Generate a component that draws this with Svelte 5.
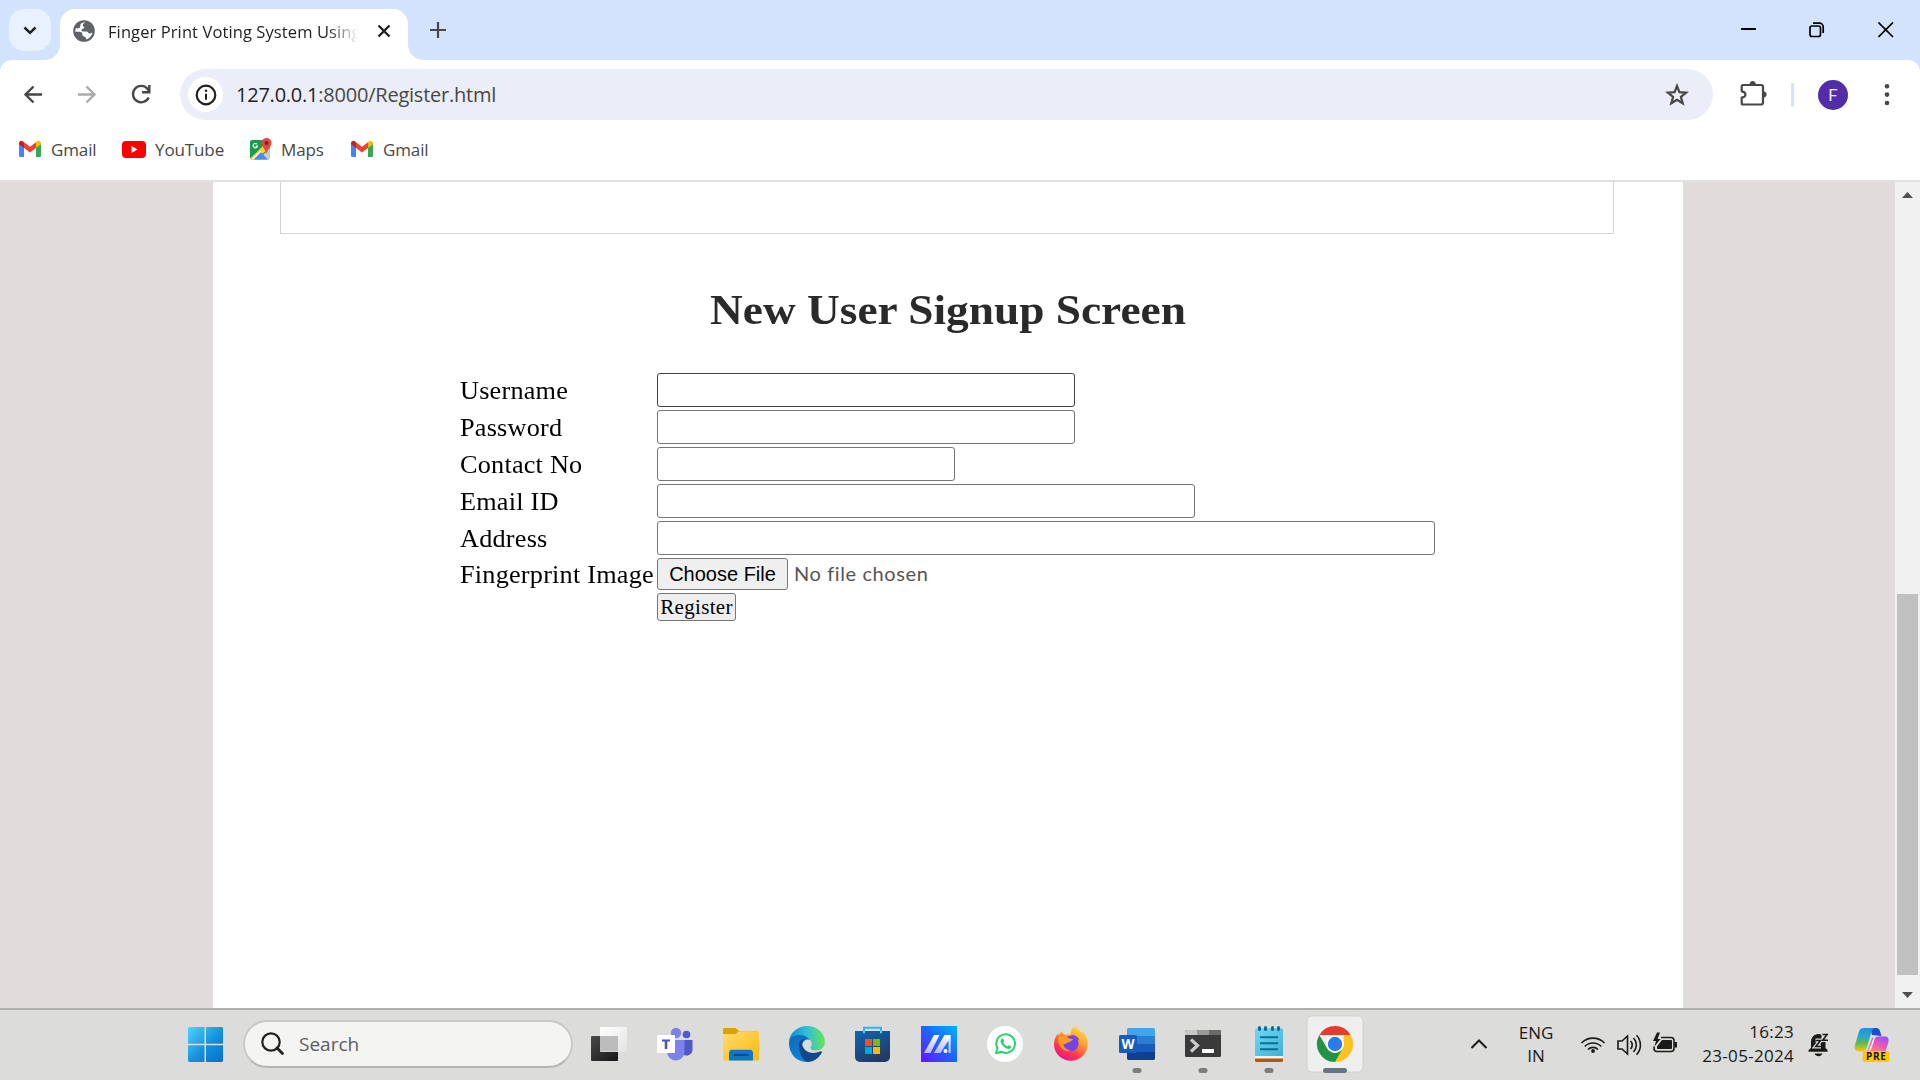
<script>
  const fields = [
    { label: 'Username', size: 'medium', type: 'text', active: true },
    { label: 'Password', size: 'medium', type: 'password' },
    { label: 'Contact No', size: 'small', type: 'text' },
    { label: 'Email ID', size: 'large', type: 'text' },
    { label: 'Address', size: 'full', type: 'text' }
  ];
</script>

{#snippet gmail()}
  <svg width="22" height="18" viewBox="0 0 22 18">
    <path d="M0 3v12.500A1.500 1.500 0 0 0 1.500 17H5V7z" fill="#4285f4" />
    <path d="M22 3v12.500a1.500 1.500 0 0 1-1.500 1.500H17V7z" fill="#34a853" />
    <path d="M17 2.500V8l5-3.700V3.200C22 1 19.500 0 18 1.300z" fill="#fbbc04" />
    <path d="M0 3.200V4.300L5 8V2.500L4 1.300C2.500 0 0 1 0 3.200z" fill="#c5221f" />
    <path d="M5 8V2.200l6 4.500 6-4.500V8l-6 4.500z" fill="#ea4335" />
  </svg>
{/snippet}

<div class="screen">
  <header class="tabs">
    <button class="tab-search" aria-label="Search tabs">
      <svg width="42" height="42" viewBox="0 0 42 42"><path d="M15.500 18.500l5.500 5.300 5.500-5.300" fill="none" stroke="#1f1f1f" stroke-width="2.500" /></svg>
    </button>
    <div class="tab">
      <svg width="22" height="22" viewBox="0 0 22 22">
        <circle cx="11" cy="11" r="10.800" fill="#5f6368" />
        <path d="M12.500 2.500c-1 .5-2.800 1-2.800 2.700 0 1.300 1.500 1 1.500 2.300 0 1.500-2.700 1-2.700 2.700 0 1 .8 1.200 2 1.200h3c1.800 0 1.700 2.200 3.200 2.200 1 0 1.800-.8 2.700-1.200-.3 3-3 6.300-6.500 7 .3-1.500-.2-2.500-1.400-2.700-1.700-.3-2.200-1.200-2.200-2.700 0-1.700-1.800-2.300-3.800-2.300H2.300c0-1.500.1-2.500.6-3.600 1.300.5 3 .6 4-.5 1.200-1.200-.2-2.200.8-3.600.8-1.100 2.800-1.500 4.800-1.500z" fill="#fff" />
      </svg>
      <span class="tab-title">Finger Print Voting System Using</span>
      <svg class="tab-close" width="14" height="14" viewBox="0 0 14 14"><path d="M1.500 1.500l11 11M12.500 1.500l-11 11" stroke="#1f1f1f" stroke-width="2.300" /></svg>
    </div>
    <svg class="new-tab" width="16" height="16" viewBox="0 0 16 16"><path d="M8 0v16M0 8h16" stroke="#474747" stroke-width="2.200" /></svg>
    <div class="window-controls">
      <svg width="16" height="16" viewBox="0 0 16 16"><path d="M1 7h15" stroke="#000" stroke-width="2" /></svg>
      <svg width="16" height="16" viewBox="0 0 16 16" fill="none" stroke="#000" stroke-width="1.700"><rect x="1" y="4" width="10.500" height="10.500" rx="2" /><path d="M4 1.200h6.500a3.700 3.700 0 0 1 3.700 3.700V11" /></svg>
      <svg width="16" height="16" viewBox="0 0 16 16"><path d="M.5.500l14.500 14.500M15 .5L.5 15" stroke="#000" stroke-width="1.700" /></svg>
    </div>
  </header>

  <nav class="toolbar">
    <svg width="180" height="60" viewBox="0 0 180 60" fill="none" stroke-width="2.400">
      <path d="M42 34.500H26M33.500 26.500l-8 8 8 8" stroke="#474747" />
      <path d="M78 34.500h16M86.500 26.500l8 8-8 8" stroke="#ababab" />
      <path d="M148.700 37.500a8.200 8.200 0 1 1-1.300-8.800l2 2.600" stroke="#474747" />
      <path d="M149.300 25v7.300H142" stroke="#474747" />
    </svg>
    <div class="omnibox">
      <span class="site-info">
        <svg width="22" height="22" viewBox="0 0 22 22"><circle cx="11" cy="11" r="9.300" fill="none" stroke="#1f1f1f" stroke-width="2.200" /><path d="M11 9.700v6" stroke="#1f1f1f" stroke-width="2" /><circle cx="11" cy="6.700" r="1.300" fill="#1f1f1f" /></svg>
      </span>
      <span class="url">127.0.0.1<span class="path">:8000/Register.html</span></span>
      <svg class="star" width="24" height="24" viewBox="0 0 24 24"><path d="M12 3l2.400 6.200 6.700.4-5.200 4.200 1.800 6.500L12 16.700l-5.700 3.600 1.800-6.500-5.200-4.200 6.700-.4z" fill="none" stroke="#474747" stroke-width="2.200" /></svg>
    </div>
    <svg width="207" height="60" viewBox="1713 60 207 60">
      <path d="M1743 85h18c1.200 0 2 .8 2 2v15.500c0 1.200-.8 2-2 2h-18c-1 0-1.300-.5-1.300-1.500v-5.300c5-.8 5-5.700 0-6.400v-5c0-.9.400-1.300 1.300-1.300z" fill="none" stroke="#474747" stroke-width="2.200" stroke-linejoin="round" />
      <path d="M1749.500 85c0-5.300 6.500-5.300 6.500 0zM1762.500 91.200c5.500 0 5.500 6.500 0 6.500z" fill="#474747" />
      <rect x="1791" y="83" width="3" height="23.500" rx="1" fill="#d3e3fd" />
      <circle cx="1833" cy="95" r="15" fill="#512da8" />
      <text x="1833" y="101.200" text-anchor="middle" font-family="Roboto, sans-serif" font-size="17" fill="#eee8f8">F</text>
      <g fill="#474747"><circle cx="1887" cy="86.300" r="2.300" /><circle cx="1887" cy="94.600" r="2.300" /><circle cx="1887" cy="103" r="2.300" /></g>
    </svg>
  </nav>

  <nav class="bookmarks">
    <span class="bookmark first">{@render gmail()}<span>Gmail</span></span>
    <span class="bookmark youtube">
      <svg width="24" height="17" viewBox="0 0 24 17"><rect width="24" height="17" rx="4" fill="#f00" /><path d="M9.500 5v7l6-3.500z" fill="#fff" /></svg>
      <span>YouTube</span>
    </span>
    <span class="bookmark maps">
      <svg width="22" height="22" viewBox="0 0 22 22">
        <rect y="2" width="19.500" height="19.500" rx="2" fill="#1a9a55" />
        <path d="M19.500 10L9 21.500h9a1.500 1.500 0 0 0 1.500-1.500z" fill="#c9ced4" />
        <path d="M0 20.500L13 8l4 4L5.500 21.500H1z" fill="#fdd02f" />
        <path d="M3 21.500l7.500-7.500 7.500 7.500z" fill="#4a8af4" />
        <path d="M3.500 21.500H1.500l9-9 1 1z" fill="#fff" />
        <path d="M7 6.200A2.200 2.200 0 1 0 7.500 8H5.500" fill="none" stroke="#fff" stroke-width="1.100" />
        <path d="M16.500 0c3 0 5 2.200 5 4.900 0 3.600-3.600 5.100-5 11.100-1.400-6-5-7.500-5-11.100C11.500 2.200 13.500 0 16.500 0z" fill="#e04a3f" />
        <circle cx="16.500" cy="5" r="1.900" fill="#851f17" />
      </svg>
      <span>Maps</span>
    </span>
    <span class="bookmark last">{@render gmail()}<span>Gmail</span></span>
  </nav>

  <main class="viewport">
    <div class="page">
      <div class="banner"></div>
      <h1>New User Signup Screen</h1>
      <form class="signup" onsubmit={(e) => e.preventDefault()}>
        {#each fields as f}
          <label class="row">
            <span class="label">{f.label}</span>
            <input class={['field', f.size, f.active && 'active']} type={f.type} />
          </label>
        {/each}
        <div class="row file-row">
          <span class="label">Fingerprint Image</span>
          <button type="button" class="choose">Choose File</button>
          <span class="file-name">No file chosen</span>
        </div>
        <button class="register">Register</button>
      </form>
    </div>
    <div class="scrollbar">
      <svg width="25" height="26" viewBox="0 0 25 26"><path d="M7 16l5.500-6 5.500 6z" fill="#505050" /></svg>
      <div class="thumb"></div>
      <svg width="25" height="26" viewBox="0 0 25 26"><path d="M7 10l5.500 6 5.500-6z" fill="#505050" /></svg>
    </div>
  </main>

  <footer class="taskbar">
    <svg class="start" width="35" height="35" viewBox="0 0 35 35">
      <defs><linearGradient id="win" x1="0" y1="0" x2="35" y2="35" gradientUnits="userSpaceOnUse"><stop offset="0" stop-color="#4fd3ff" /><stop offset=".55" stop-color="#1490df" /><stop offset="1" stop-color="#0072ce" /></linearGradient></defs>
      <path d="M1 0h15.500v16.700H0V1zM18 0h16l1 1v15.700H18zM0 18.300h16.500V35H1l-1-1zM18 18.300h17V34l-1 1H18z" fill="url(#win)" />
    </svg>
    <div class="search">
      <svg width="24" height="24" viewBox="0 0 24 24"><circle cx="10" cy="10" r="8.700" fill="none" stroke="#1f1f1f" stroke-width="2.200" /><path d="M16 16l5.500 5.500" stroke="#1f1f1f" stroke-width="2.800" stroke-linecap="round" /></svg>
      <span>Search</span>
    </div>
    <div class="apps">
      <svg class="app" viewBox="0 0 66 70">
        <defs><linearGradient id="tv1" x2="1" y2="1"><stop stop-color="#4a4a4a" /><stop offset="1" stop-color="#161616" /></linearGradient><linearGradient id="tv2" x2="1" y2="1"><stop stop-color="#fff" /><stop offset="1" stop-color="#e2e2e2" /></linearGradient></defs>
        <rect x="15" y="26" width="27" height="25" rx="1" fill="url(#tv1)" />
        <rect x="24" y="17" width="27" height="25" rx="1" fill="url(#tv2)" />
        <rect x="24" y="26" width="18" height="15.500" fill="#bcbcbc" />
      </svg>
      <svg class="app" viewBox="5 0 66 70">
        <circle cx="49.500" cy="24.500" r="3.800" fill="#5059c9" /><path d="M43 30h12.500v9.500c0 3.500-2.500 6-6 6s-6.500-2.500-6.500-6z" fill="#5059c9" />
        <circle cx="39" cy="23" r="5.200" fill="#7b83eb" /><path d="M30 30h17.500v11.500c0 5-4 9-8.700 9s-8.800-4-8.800-9z" fill="#7b83eb" />
        <rect x="20" y="25" width="18" height="18" rx="1" fill="#fff" /><path d="M25 29.500h8v2h-2.700V39h-2.600v-7.500H25z" fill="#4b53bc" />
      </svg>
      <svg class="app" viewBox="0 0 66 70">
        <defs><linearGradient id="fo" x2="1" y2="1"><stop stop-color="#ffdc70" /><stop offset="1" stop-color="#fcb80e" /></linearGradient></defs>
        <path d="M15 19.500c0-1 .5-1.500 1.500-1.500h11l4 3.500H50V27H15z" fill="#e0a000" />
        <path d="M15 24h12.500l3.500-2.500h18.500c1 0 1.500.5 1.500 1.500v26.500c0 .5-.5 1-1 1H16c-.5 0-1-.5-1-1z" fill="url(#fo)" />
        <path d="M21 50.500V43c0-2 1-3.300 3-3.300h18c2 0 3 1.300 3 3.300v7.500z" fill="#0b78cc" /><path d="M26.500 45h13" stroke="#064f8c" stroke-width="2" stroke-linecap="round" />
      </svg>
      <svg class="app" viewBox="0 0 66 70">
        <defs>
          <linearGradient id="e1" x1="0" x2="1"><stop stop-color="#1587d6" /><stop offset=".5" stop-color="#2fc0d8" /><stop offset="1" stop-color="#6be358" /></linearGradient>
          <linearGradient id="e2" x1="0" y1="0" x2=".6" y2="1"><stop stop-color="#0e69b8" /><stop offset="1" stop-color="#0f86dd" /></linearGradient>
        </defs>
        <path d="M15 31C16 23 23.500 16 33 16c10 0 18 7 18 16 0 5-4 8.500-9 8.500-4.500 0-6.500-2-5-4 1.500-2 1-6-3-7.500C27 26.500 18 27 15 31z" fill="url(#e1)" />
        <path d="M15 33c0-4 3.500-8 10-8 5 0 9 2 10.500 4.500-4-.7-7.500 2-7.500 7 0 7 7 11 13 9-2 3.500-5 6.500-8 6.500-10.500 0-18-8-18-19z" fill="url(#e2)" />
        <path d="M25 35c0-3 2-6 6-6.500-3 2.300-3.500 5.500-2 8.500 3.500 6.500 11 7 17 4.500 1.500-.6 2.500.2 1.700 1.500C44 49 39 52 33.500 52 28 50 25 43 25 35z" fill="#114a8b" />
      </svg>
      <svg class="app" viewBox="0 0 66 70">
        <defs><linearGradient id="st" x2=".5" y2="1"><stop stop-color="#0a68b4" /><stop offset="1" stop-color="#243a66" /></linearGradient></defs>
        <path d="M24 23v-5.200h17V23" fill="none" stroke="#2bb5ec" stroke-width="2" />
        <path d="M15 21h35v26a5 5 0 0 1-5 5H20a5 5 0 0 1-5-5z" fill="url(#st)" />
        <path d="M25 29h7v7h-7z" fill="#f25022" /><path d="M33 29h7v7h-7z" fill="#7fba00" /><path d="M25 37h7v7h-7z" fill="#00a4ef" /><path d="M33 37h7v7h-7z" fill="#ffb900" />
        <path d="M24 20.500v2.700M41 20.500v2.700" stroke="#5ccdf6" stroke-width="2" />
      </svg>
      <svg class="app" viewBox="0 0 66 70">
        <defs><linearGradient id="aa" x1="0" y1="1" x2="1" y2="0"><stop stop-color="#6a11ff" /><stop offset=".5" stop-color="#1f62ff" /><stop offset="1" stop-color="#00b4ff" /></linearGradient><linearGradient id="aw" x2="0" y2="1"><stop stop-color="#fff" /><stop offset="1" stop-color="#b8b4ff" /></linearGradient></defs>
        <rect x="15" y="16" width="36" height="36" fill="url(#aa)" />
        <path d="M28 25h5.500L24.500 43H18zM38.500 25h6.200v18h-2.200V30.500L34.500 43H28z" fill="url(#aw)" /><circle cx="39.500" cy="41" r="2" fill="#fff" />
      </svg>
      <svg class="app" viewBox="0 0 66 70">
        <circle cx="33" cy="34" r="18" fill="#fff" />
        <path d="M24 43.300l1.500-5.300a9.300 9.300 0 1 1 3.700 3.700z" fill="none" stroke="#25d366" stroke-width="2" stroke-linejoin="round" />
        <path d="M29.500 29c.8-.8 1.500-.5 1.800.2l.8 1.800c.2.500-.9 1.500-.6 2 .8 1.500 2 2.500 3.500 3.200.6.300 1.200-1.300 1.800-1l2 1c.7.400.5 1.500-.2 2.100-1.500 1.300-4 .5-6-1-2.200-1.600-4-4.200-4.100-6 0-1 .4-1.800 1-2.300z" fill="#25d366" />
      </svg>
      <svg class="app" viewBox="0 0 66 70">
        <defs><linearGradient id="ff" x1=".9" y1="0" x2=".3" y2="1"><stop stop-color="#fff044" /><stop offset=".4" stop-color="#ffa02a" /><stop offset=".75" stop-color="#ff3750" /><stop offset="1" stop-color="#e8128c" /></linearGradient></defs>
        <path d="M37.500 16c1.500 2.500 5 4.500 7 7.500l.5-2c3 3.500 5 8 4.700 13C49.300 44 42 50.700 33 50.700S16 44 16 34.500c0-4.500 1.500-8.500 4-11 .2 1 .4 1.500.8 2l3-4.500c.3 2 1.500 3.500 3.500 3.700l5-.2c0-3.500 2-7 5.200-8.500z" fill="url(#ff)" />
        <circle cx="33" cy="33.500" r="7.700" fill="#7542e5" />
        <path d="M20 28c3-3 8-2.500 11 .5l4 .5c-1 2-3 3-5 3.500-2 .5-3 2-5 1.500 1 4 4 6 8 6.500-7 2-13-3-13-12.500z" fill="#ff9b22" />
        <path d="M33 25c4-.5 8 2 8.500 6-1.500-2-3.500-3-5.500-2.500z" fill="#8f3fe8" />
      </svg>
      <svg class="app" viewBox="0 0 66 70">
        <path d="M23 26v-6.500c0-.8.700-1.500 1.500-1.500h25c.8 0 1.500.7 1.500 1.500V26z" fill="#41a5ee" /><path d="M23 26h28v8H23z" fill="#2b7cd3" /><path d="M23 34h28v8H23z" fill="#185abd" /><path d="M23 42h28v6.500c0 .8-.7 1.500-1.500 1.500h-25c-.8 0-1.500-.7-1.500-1.500z" fill="#103f91" />
        <rect x="15" y="25" width="18" height="18" rx="1.500" fill="#185abd" /><text x="24" y="39" text-anchor="middle" font-family="Open Sans, sans-serif" font-weight="700" font-size="13.500" fill="#fff">W</text>
        <rect class="running" x="28.500" y="58" width="9" height="5" rx="2.500" />
      </svg>
      <svg class="app" viewBox="0 0 66 70">
        <rect x="15" y="20" width="36" height="27" rx="1.500" fill="#3a3a3a" /><path d="M15 25v-3.500c0-.8.700-1.500 1.500-1.500H27v5z" fill="#c8c8c8" /><path d="M27 20h12v5H27z" fill="#999" /><path d="M39 20h10.500c.8 0 1.500.7 1.500 1.500V25H39z" fill="#6a6a6a" />
        <path d="M21 29.500l6.500 6-6.500 6" fill="none" stroke="#ccc" stroke-width="3.200" /><rect x="32" y="39" width="12" height="4" rx=".5" fill="#fff" />
        <rect class="running" x="28.500" y="58" width="9" height="5" rx="2.500" />
      </svg>
      <svg class="app" viewBox="0 0 66 70">
        <defs><linearGradient id="np" x2="1" y2="1"><stop stop-color="#6fd9f4" /><stop offset="1" stop-color="#3fb0d6" /></linearGradient></defs>
        <path d="M19 46h28v4.500a1.500 1.500 0 0 1-1.500 1.500h-25a1.500 1.500 0 0 1-1.500-1.500z" fill="#b8560f" /><path d="M19 44h28v4.500H19z" fill="#f3f3f3" /><path d="M19 46V20c0-1 .7-1.700 1.700-1.700h24.600c1 0 1.700.7 1.700 1.700v26z" fill="url(#np)" />
        <path d="M24 27.200h18M24 33.200h18M24 39.200h18" stroke="#0a6d92" stroke-width="1.900" /><path d="M23.500 17.500v2M29.500 17.500v2M36.500 17.500v2M42.500 17.500v2" stroke="#0a6d92" stroke-width="3" stroke-linecap="round" />
        <rect class="running" x="28.500" y="58" width="9" height="5" rx="2.500" />
      </svg>
      <svg class="app" viewBox="0 0 66 70">
        <rect x="5" y="6" width="56" height="56" rx="5" fill="#efefef" stroke="#d2d2d1" />
        <path d="M17.400 25A18 18 0 0 1 48.600 25H33z" fill="#e33b2e" />
        <path d="M48.600 25A18 18 0 0 1 33 52l7.800-13.500L42 25z" fill="#fcc31e" />
        <path d="M33 52A18 18 0 0 1 17.400 25l7.800 13.500L33 43l7.800-4.500z" fill="#229342" />
        <circle cx="33" cy="34" r="9" fill="#fff" /><circle cx="33" cy="34" r="7.200" fill="#2b79ea" />
        <rect x="21" y="58" width="24" height="5" rx="2.500" fill="#647685" />
      </svg>
    </div>
    <div class="tray">
      <svg width="18" height="12" viewBox="0 0 18 12"><path d="M1.500 10L9 2.500l7.500 7.500" fill="none" stroke="#1a1a1a" stroke-width="2" /></svg>
      <div class="lang"><span>ENG</span><span>IN</span></div>
      <svg class="status" width="100" height="26" viewBox="1579 1030 100 26" fill="none" stroke="#1a1a1a" stroke-width="1.600">
        <path d="M1581.500 1042a16 16 0 0 1 23 0M1584.700 1045.500a11.500 11.500 0 0 1 16.600 0M1588 1048.500a7 7 0 0 1 10 0" /><circle cx="1593" cy="1050" r="1.900" fill="#1a1a1a" stroke="none" />
        <path d="M1618 1040h4l5.500-5v18l-5.500-5h-4zM1630.500 1040a5.500 5.500 0 0 1 0 8M1633.500 1037a10 10 0 0 1 0 14M1636.500 1034.300a14 14 0 0 1 0 19.400" />
        <path d="M1661 1036.500h10a3 3 0 0 1 3 3v8a3 3 0 0 1-3 3h-14a3 3 0 0 1-3-3v-2" /><path d="M1662 1039h9c.6 0 1 .4 1 1v7c0 .6-.4 1-1 1h-13c-.6 0-1-.4-1-1v-1.500z" fill="#1a1a1a" stroke="none" /><path d="M1674.500 1041h2.500v5.500h-2.500zM1657 1031.500l-4 8.500h3l-1.500 5.500 6-7.500h-3l2.500-6.500z" fill="#1a1a1a" stroke="none" />
      </svg>
      <div class="clock"><span>16:23</span><span>23-05-2024</span></div>
      <svg class="bell" width="22" height="24" viewBox="0 0 22 24" fill="none">
        <path d="M3 9.500C3 4.500 6 1 10.500 1c4.500 0 7 3.500 7 8.500v5.500l2 2v1.800h-19v-1.800L3 15z" fill="#1a1a1a" /><path d="M6.500 20.500h8c-.8 1.800-2.200 2.700-4 2.700s-3.200-.9-4-2.700z" fill="#1a1a1a" />
        <path d="M13.500 0H22v9h-8.500z" fill="#dcdcda" />
        <path d="M7.500 7.500h5L7.800 13.500h5.200" stroke="#dcdcda" stroke-width="4" /><path d="M7.500 7.500h5L7.800 13.500h5.200" stroke="#1a1a1a" stroke-width="1.600" />
        <path d="M14.500 1.500h4.500L14.800 7.200h5.200" stroke="#1a1a1a" stroke-width="1.600" />
      </svg>
      <svg class="copilot" width="36" height="36" viewBox="0 0 36 36">
        <defs>
          <linearGradient id="c1" x2="0" y2="1"><stop stop-color="#1a8ff0" /><stop offset=".35" stop-color="#25a8cf" /><stop offset=".65" stop-color="#62bb4c" /><stop offset="1" stop-color="#f8c713" /></linearGradient>
          <linearGradient id="c2" x1=".8" y1="0" x2=".2" y2="1"><stop stop-color="#a24df0" /><stop offset=".5" stop-color="#e85cb5" /><stop offset="1" stop-color="#ff9160" /></linearGradient>
        </defs>
        <path d="M16 1h6.500c2 0 3 1.500 3.500 3.200L27.500 9 18 8z" fill="#1c4fc9" />
        <path d="M10 1h11.500c-2.500 0-3.500 2-4.200 4.500L13 20c-1 3-2.500 4.500-5 4.500H4.500C1 24.500 0 21.500 1 18L5 4.500C5.700 2 7.500 1 10 1z" fill="url(#c1)" />
        <path d="M23 9.500h8c3 0 4.200 2.500 3.400 5.500L31.500 25H9c3 0 4.500-1.500 5.500-4.500l3-8c.8-2 2-3 5.500-3z" fill="url(#c2)" />
        <path d="M20 9.500h4c-2 0-3 1-3.600 3l-2.600 8c-.8 2.500-2 3.500-4 3.500 1.200-1 1.600-2 2-3.500z" fill="#f4edf2" />
        <rect x="8.500" y="24" width="27" height="11" rx="2" fill="#fdc70d" /><text x="22.300" y="33.200" text-anchor="middle" font-family="Open Sans, sans-serif" font-weight="700" font-size="10" letter-spacing=".7" fill="#151515">PRE</text>
      </svg>
    </div>
  </footer>
</div>

<style>
  :global(body) { margin: 0; }
  .screen { width: 1920px; height: 1080px; display: flex; flex-direction: column; overflow: hidden; background: #fff; font-family: 'Open Sans', sans-serif; color: #474747; }
  svg { display: block; flex: none; }
  button { padding: 0; margin: 0; border: 0; font: inherit; color: inherit; }
  .tabs { height: 60px; flex: none; display: flex; align-items: flex-start; background: #d3e3fd; box-shadow: 0 12px 0 #d3e3fd; }
  .tab-search { width: 42px; height: 42px; margin: 9px 9px 0 9px; border-radius: 15px; background: #e9f1fe; }
  .tab { position: relative; width: 348px; height: 51px; margin-top: 9px; padding: 0 17px 7px 13px; box-sizing: border-box; display: flex; align-items: center; background: #fff; border-radius: 15px 15px 0 0; }
  .tab::before, .tab::after { content: ''; position: absolute; bottom: 0; width: 15px; height: 15px; }
  .tab::before { right: 100%; background: radial-gradient(circle at 0 0, #d3e3fd 14.500px, #fff 15px); }
  .tab::after { left: 100%; background: radial-gradient(circle at 100% 0, #d3e3fd 14.500px, #fff 15px); }
  .tab-title { width: 252px; margin: 2px 0 0 13px; overflow: hidden; white-space: nowrap; font-size: 16.500px; line-height: 26px; letter-spacing: .1px; color: #1f1f1f; mask-image: linear-gradient(90deg, #000 220px, transparent 250px); }
  .tab-close { margin-left: 17px; }
  .new-tab { margin: 22px 0 0 22px; }
  .window-controls { display: flex; gap: 53px; margin: 22px 26px 0 auto; }
  .toolbar { height: 60px; flex: none; display: flex; align-items: center; background: #fff; border-radius: 12px 12px 0 0; position: relative; }
  .omnibox { width: 1533px; height: 51px; margin-top: 9px; box-sizing: border-box; padding: 0 24px 0 8px; display: flex; align-items: center; border-radius: 26px; background: #ebeef8; }
  .site-info { width: 35px; height: 35px; border-radius: 50%; background: #fff; display: grid; place-items: center; }
  .url { margin: 0 auto 0 13px; font-size: 20px; line-height: 28px; letter-spacing: -.23px; color: #1f1f1f; }
  .path { color: #474747; }
  .bookmarks { height: 60px; flex: none; display: flex; align-items: center; background: #fff; border-bottom: 2px solid #e1e1e1; padding-left: 19px; font-size: 17px; letter-spacing: -.12px; }
  .bookmark { display: flex; align-items: center; gap: 10px; height: 58px; padding-bottom: 2px; }
  .first { width: 103px; }
  .youtube { width: 128px; gap: 9px; }
  .maps { width: 101px; gap: 9px; }
  .viewport { height: 826px; flex: none; display: flex; background: #e0dcdb; }
  .page { width: 1470px; margin-left: 213px; background: #fff; overflow: hidden; }
  .banner { width: 1332px; height: 51px; margin-left: 67px; border: 1px solid #d3d3d3; border-top: 0; }
  h1 { margin: 52px 0 0; height: 50px; text-align: center; font: 700 42px/48px 'Liberation Serif', serif; color: #2a2a2a; transform: scaleX(1.080); }
  .signup { margin: 37px 0 0 247px; font-family: 'Liberation Serif', serif; color: #000; }
  .row { display: flex; height: 37px; align-items: flex-start; }
  .label { width: 197px; font-size: 25px; line-height: 35px; letter-spacing: .2px; white-space: nowrap; transform: scaleX(1.050); transform-origin: left; }
  .field { height: 34px; box-sizing: border-box; border: 1px solid #767676; border-radius: 3px; background: #fff; padding: 0 4px; outline: none; }
  .active { border-color: #3f3f46; }
  .small { width: 298px; }
  .medium { width: 418px; }
  .large { width: 538px; }
  .full { width: 778px; }
  .file-row { height: 35px; }
  .file-row .label { line-height: 33px; }
  .choose { width: 131px; height: 32px; box-sizing: border-box; border: 1px solid #767676; border-radius: 3px; background: #efefef; font: 20px/30px 'Liberation Sans', sans-serif; }
  .file-name { margin-left: 6px; font: 20px/30px 'Comic Sans MS', Lato, sans-serif; letter-spacing: .6px; color: #555; }
  .register { display: block; width: 79px; height: 28px; margin-left: 197px; box-sizing: border-box; border: 1px solid #767676; border-radius: 3px; background: #efefef; font-size: 21px; line-height: 26px; letter-spacing: .3px; }
  .scrollbar { width: 25px; margin-left: auto; display: flex; flex-direction: column; background: #f1f1f1; }
  .thumb { width: 21px; height: 381px; margin: auto 2px 7px; background: #c1c1c1; }
  .taskbar { height: 70px; flex: none; border-top: 2px solid #afafae; display: flex; align-items: center; background: #dcdcda; }
  .start { margin: 0 0 1px 188px; }
  .search { width: 330px; height: 48px; box-sizing: border-box; margin: 0 3px 2px 20px; padding-left: 16px; display: flex; align-items: center; border: 2px solid #c9c9c8; border-bottom-color: #b5b5b4; border-radius: 24px; background: #f4f4f3; color: #5d5d5d; font-size: 19px; }
  .search span { margin-left: 14px; }
  .apps { display: flex; }
  .app { width: 66px; height: 70px; }
  .running { fill: #7d7d7c; }
  .tray { flex: 1; display: flex; align-items: center; color: #1a1a1a; font-size: 17px; line-height: 24px; margin: 0 0 2px 102px; }
  .lang { width: 60px; margin-left: 18px; display: flex; flex-direction: column; align-items: center; line-height: 23px; }
  .status { margin: 0 0 1px 13px; }
  .clock { margin-left: 15px; width: 100px; display: flex; flex-direction: column; align-items: flex-end; letter-spacing: .3px; }
  .bell { margin: 1px 0 0 14px; }
  .copilot { margin: 2px 0 0 24px; }
</style>
